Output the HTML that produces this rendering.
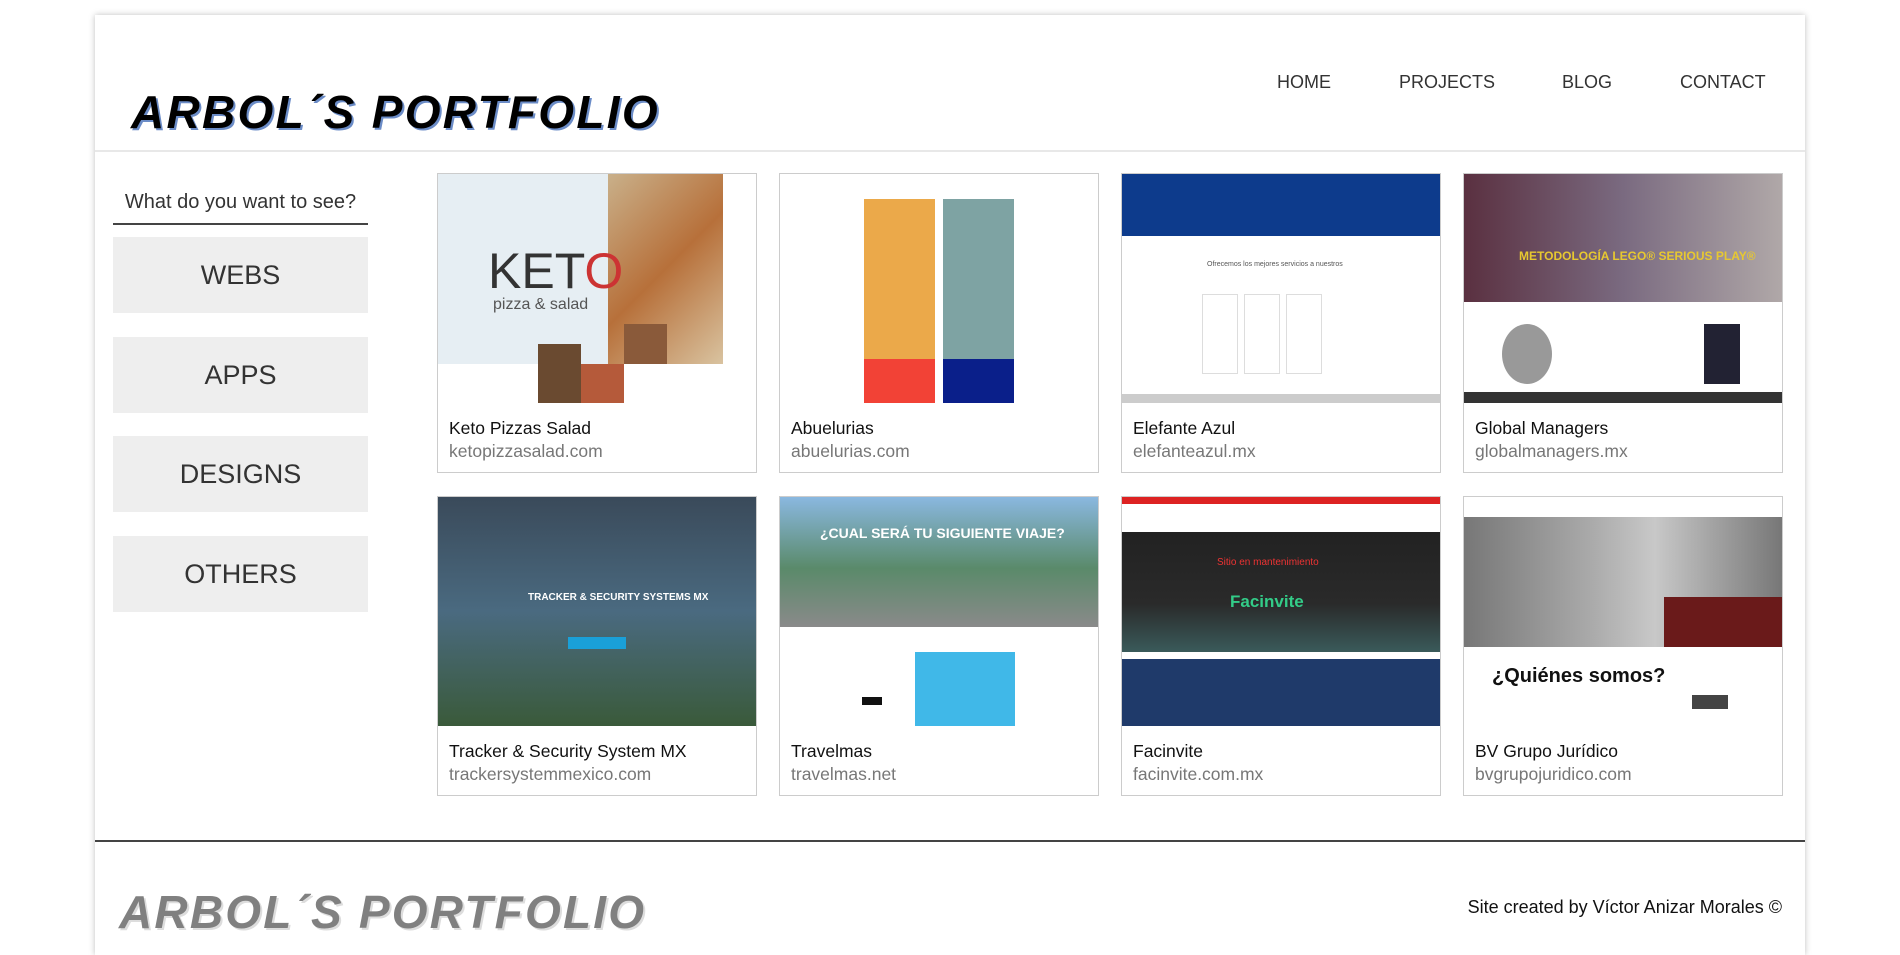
<!DOCTYPE html>
<html><head><meta charset="utf-8"><style>
*{margin:0;padding:0;box-sizing:border-box}
body{width:1900px;height:937px;overflow:hidden;background:#fff;font-family:"Liberation Sans",Arial,sans-serif;position:relative}
.wrap{position:absolute;left:95px;top:15px;width:1710px;height:940px;background:#fff;box-shadow:0 0 6px rgba(0,0,0,.25)}
.abs{position:absolute}
.title{position:absolute;left:36px;top:70px;font-size:46px;font-weight:bold;font-style:italic;color:#000;text-shadow:2px 2px 0 #6b8cc7;letter-spacing:2.3px;white-space:nowrap}
.nav{position:absolute;top:57px;font-size:18px;color:#333}
.hline{position:absolute;left:0;top:135px;width:1710px;height:2px;background:#e8e8e8}
.q{position:absolute;left:18px;top:176px;width:255px;text-align:center;font-size:20px;color:#333}
.ql{position:absolute;left:18px;top:208px;width:255px;height:2px;background:#444}
.btn{position:absolute;left:18px;width:255px;height:76px;background:#eee;font-size:27px;color:#333;text-align:center;line-height:76px}
.card{position:absolute;width:320px;height:300px;border:1px solid #ccc;background:#fff;overflow:hidden}
.card .img{position:absolute;left:0;top:0;width:318px;height:229px;overflow:hidden}
.card .t{position:absolute;left:11px;top:244px;font-size:17.5px;color:#111}
.card .u{position:absolute;left:11px;top:267px;font-size:17.5px;color:#777}
.foot{position:absolute;left:0;top:825px;width:1710px;height:2px;background:#444}
.ft{position:absolute;left:24px;top:870px;font-size:46px;font-weight:bold;font-style:italic;color:#808080;text-shadow:2px 2px 0 #ddd;letter-spacing:2.2px;white-space:nowrap}
.fr{position:absolute;right:23px;top:882px;font-size:18px;color:#111}
</style></head><body>
<div class="wrap">
<div class="title">ARBOL´S PORTFOLIO</div>
<div class="nav" style="left:1182px">HOME</div>
<div class="nav" style="left:1304px">PROJECTS</div>
<div class="nav" style="left:1467px">BLOG</div>
<div class="nav" style="left:1585px">CONTACT</div>
<div class="hline"></div>
<div class="q">What do you want to see?</div>
<div class="ql"></div>
<div class="btn" style="top:222px">WEBS</div>
<div class="btn" style="top:322px">APPS</div>
<div class="btn" style="top:421px">DESIGNS</div>
<div class="btn" style="top:521px">OTHERS</div>

<div class="card" style="left:342px;top:158px"><div class="img" style="background:#fff">
<div class="abs" style="left:0;top:0;width:170px;height:190px;background:#e6eef3"></div>
<div class="abs" style="left:170px;top:0;width:115px;height:190px;background:linear-gradient(135deg,#c9b08a,#b7703a 50%,#d9c3a0)"></div>
<div class="abs" style="left:50px;top:68px;font-size:50px;color:#333">KET<span style="color:#c33">O</span></div>
<div class="abs" style="left:55px;top:122px;font-size:16px;color:#555">pizza &amp; salad</div>
<div class="abs" style="left:100px;top:170px;width:43px;height:59px;background:#6a4a30"></div>
<div class="abs" style="left:186px;top:150px;width:43px;height:40px;background:#8a5a3a"></div>
<div class="abs" style="left:143px;top:190px;width:43px;height:39px;background:#b55a3a"></div>
</div><div class="t">Keto Pizzas Salad</div><div class="u">ketopizzasalad.com</div></div>

<div class="card" style="left:684px;top:158px"><div class="img" style="background:#fff">
<div class="abs" style="left:84px;top:25px;width:71px;height:197px;background:#eba94a"></div>
<div class="abs" style="left:163px;top:25px;width:71px;height:197px;background:#7ea3a3"></div>
<div class="abs" style="left:84px;top:185px;width:71px;height:44px;background:#f24236"></div>
<div class="abs" style="left:163px;top:185px;width:71px;height:44px;background:#0a1f8a"></div>
</div><div class="t">Abuelurias</div><div class="u">abuelurias.com</div></div>

<div class="card" style="left:1026px;top:158px"><div class="img" style="background:#fff">
<div class="abs" style="left:0;top:0;width:318px;height:62px;background:#0d3b8c"></div>
<div class="abs" style="left:85px;top:87px;font-size:7px;color:#555">Ofrecemos los mejores servicios a nuestros</div>
<div class="abs" style="left:80px;top:120px;width:36px;height:80px;border:1px solid #ddd"></div>
<div class="abs" style="left:122px;top:120px;width:36px;height:80px;border:1px solid #ddd"></div>
<div class="abs" style="left:164px;top:120px;width:36px;height:80px;border:1px solid #ddd"></div>
<div class="abs" style="left:0;top:220px;width:318px;height:9px;background:#ccc"></div>
</div><div class="t">Elefante Azul</div><div class="u">elefanteazul.mx</div></div>

<div class="card" style="left:1368px;top:158px"><div class="img" style="background:#fff">
<div class="abs" style="left:0;top:0;width:318px;height:128px;background:linear-gradient(90deg,#5a3040,#7a6a80 50%,#b0a8a8)"></div>
<div class="abs" style="left:55px;top:75px;font-size:12px;color:#e7c830;font-weight:bold">METODOLOGÍA LEGO® SERIOUS PLAY®</div>
<div class="abs" style="left:38px;top:150px;width:50px;height:60px;background:#999;border-radius:50%"></div>
<div class="abs" style="left:240px;top:150px;width:36px;height:60px;background:#223"></div>
<div class="abs" style="left:0;top:218px;width:318px;height:11px;background:#333"></div>
</div><div class="t">Global Managers</div><div class="u">globalmanagers.mx</div></div>

<div class="card" style="left:342px;top:481px"><div class="img" style="background:linear-gradient(180deg,#3a4a5a,#4a6a80 50%,#3a5a3a)">
<div class="abs" style="left:90px;top:95px;font-size:10px;color:#fff;font-weight:bold">TRACKER &amp; SECURITY SYSTEMS MX</div>
<div class="abs" style="left:130px;top:140px;width:58px;height:12px;background:#1aa0d8"></div>
</div><div class="t">Tracker &amp; Security System MX</div><div class="u">trackersystemmexico.com</div></div>

<div class="card" style="left:684px;top:481px"><div class="img" style="background:#fff">
<div class="abs" style="left:0;top:0;width:318px;height:130px;background:linear-gradient(180deg,#8ab8e0,#5a8a6a 55%,#8a8a8a)"></div>
<div class="abs" style="left:40px;top:28px;font-size:14px;color:#fff;font-weight:bold">¿CUAL SERÁ TU SIGUIENTE VIAJE?</div>
<div class="abs" style="left:135px;top:155px;width:100px;height:74px;background:#40b8e8"></div>
<div class="abs" style="left:82px;top:200px;width:20px;height:8px;background:#111"></div>
</div><div class="t">Travelmas</div><div class="u">travelmas.net</div></div>

<div class="card" style="left:1026px;top:481px"><div class="img" style="background:#fff">
<div class="abs" style="left:0;top:0;width:318px;height:7px;background:#d22"></div>
<div class="abs" style="left:0;top:35px;width:318px;height:120px;background:linear-gradient(180deg,#222,#2a2a2a 60%,#3a5a5a)"></div>
<div class="abs" style="left:95px;top:60px;font-size:10px;color:#e33">Sitio en mantenimiento</div>
<div class="abs" style="left:108px;top:95px;font-size:17px;color:#3c8;font-weight:bold">Facinvite</div>
<div class="abs" style="left:0;top:162px;width:318px;height:67px;background:#1f3a6a"></div>
</div><div class="t">Facinvite</div><div class="u">facinvite.com.mx</div></div>

<div class="card" style="left:1368px;top:481px"><div class="img" style="background:#fff">
<div class="abs" style="left:0;top:20px;width:318px;height:130px;background:linear-gradient(90deg,#777,#aaa 40%,#c8c8c8 60%,#777)"></div>
<div class="abs" style="left:200px;top:100px;width:118px;height:50px;background:#6a1a1a"></div>
<div class="abs" style="left:28px;top:168px;font-size:20px;color:#111;font-weight:bold">¿Quiénes somos?</div>
<div class="abs" style="left:228px;top:198px;width:36px;height:14px;background:#444"></div>
</div><div class="t">BV Grupo Jurídico</div><div class="u">bvgrupojuridico.com</div></div>

<div class="foot"></div>
<div class="ft">ARBOL´S PORTFOLIO</div>
<div class="fr">Site created by Víctor Anizar Morales ©</div>
</div>
</body></html>
